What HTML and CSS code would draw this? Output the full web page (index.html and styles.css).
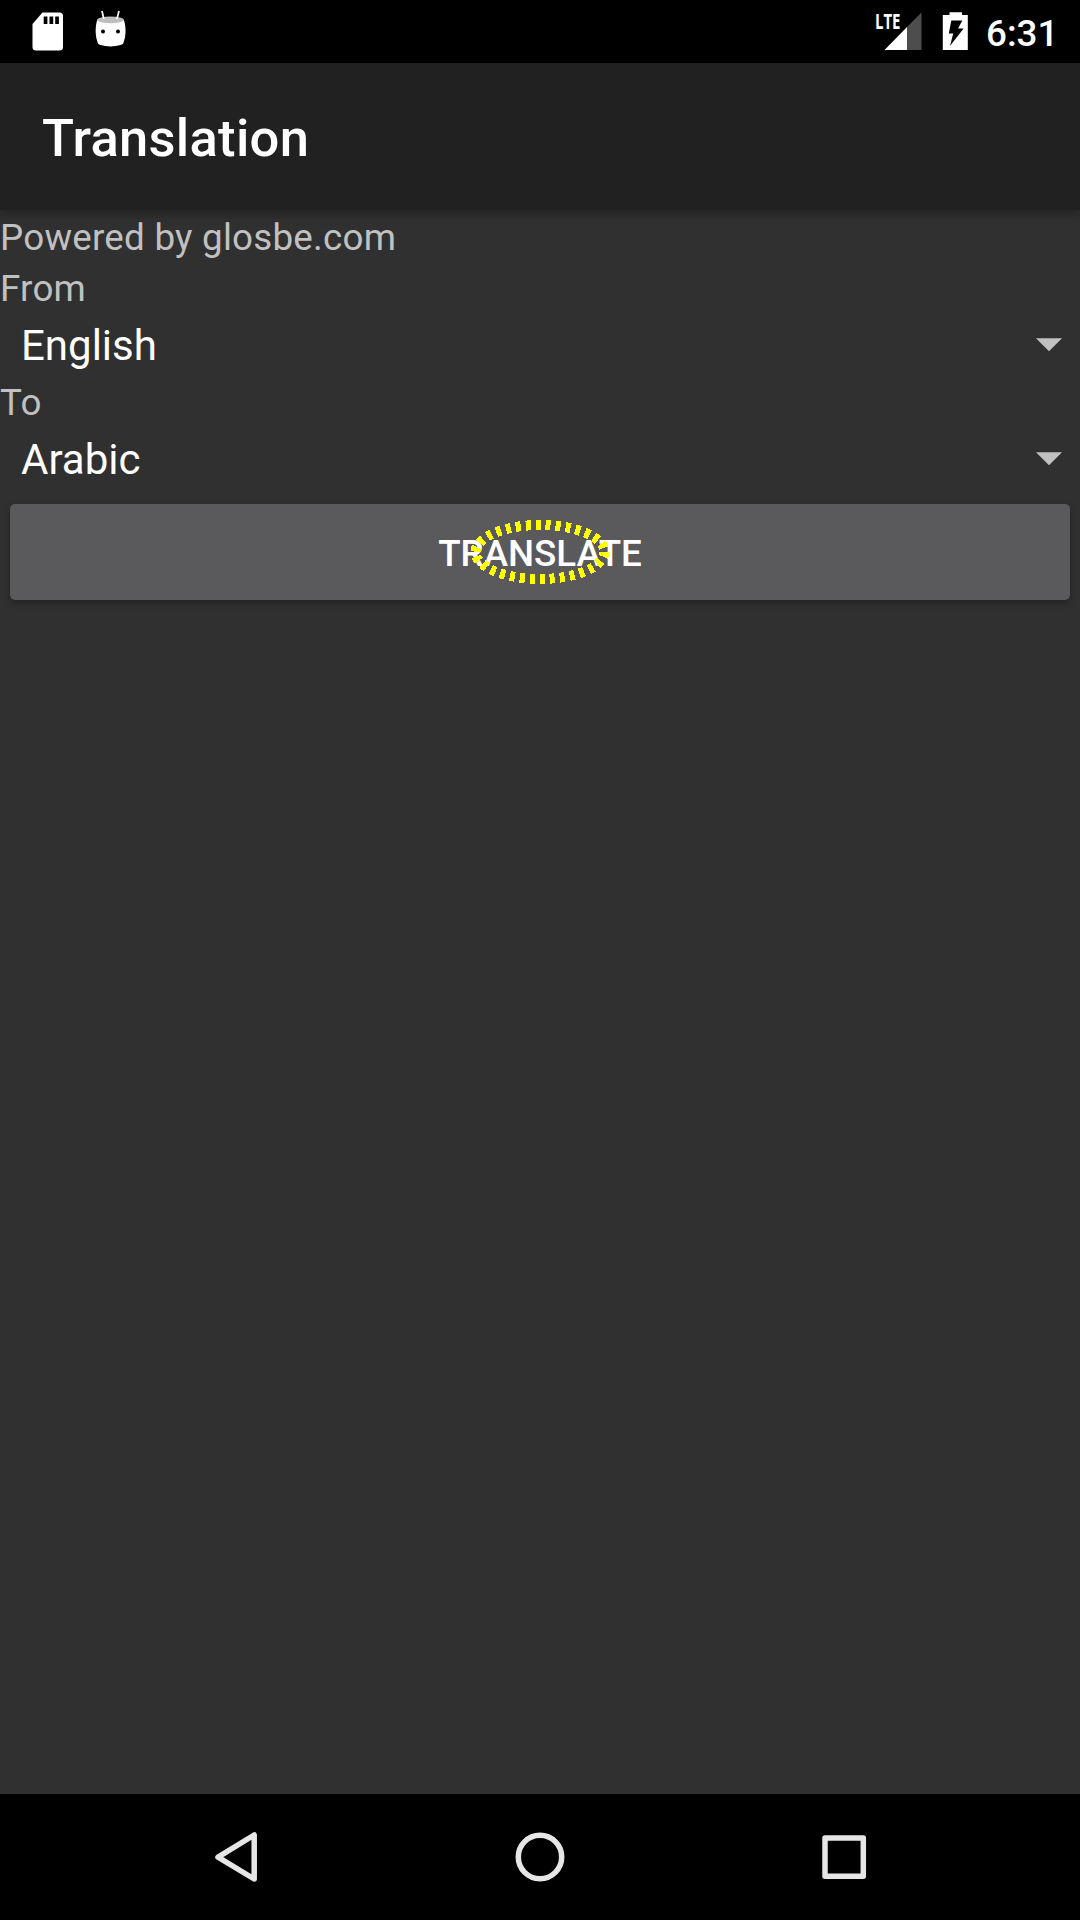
FILE: index.html
```html
<!DOCTYPE html>
<html lang="en">
<head>
<meta charset="utf-8">
<title>Translation</title>
<link rel="stylesheet" href="styles.css">
</head>
<body>
<div class="screen">
  <header class="status-bar">
    <svg class="icon-notifications" width="180" height="63" viewBox="0 0 180 63">
      <path fill="#fff" d="M42.500 12.500H59.500Q63 12.500 63 16V47Q63 50.500 59.500 50.500H36Q32.500 50.500 32.500 47V24Z"/>
      <path d="M43.700 16.500h3.700v7.500h-3.700zM49.500 16.500h3.700v7.500h-3.700zM55.200 16.500h3.700v7.500h-3.700z"/>
      <path stroke="#fff" stroke-width="1.700" d="M102 11l2 9M119 11l-2.300 9"/>
      <path fill="#fff" d="M97.300 19.500C95 27 95 36 98 43.500Q99 45.500 110.500 46.500Q122 45.500 123.200 43.500C126.200 36 126.200 27 123.800 19.500Z"/>
      <ellipse cx="110.500" cy="19.800" rx="13.200" ry="3.400" fill="#bdbdbd"/>
      <path stroke="#fff" stroke-width="1.700" d="M103.300 17l.7 2M117.400 17l-.6 2"/>
      <circle cx="103" cy="31.500" r="2"/>
      <circle cx="118" cy="31.500" r="2"/>
    </svg>
    <div class="status-right">
      <svg width="100" height="63" viewBox="870 0 100 63">
        <path fill="#4d4d4d" d="M921.500 12.500V50H907V27Z"/>
        <path fill="#fff" d="M884.500 50L907 27V50Z"/>
        <text class="network" x="875" y="29" textLength="25.500" lengthAdjust="spacingAndGlyphs">LTE</text>
        <path fill="#fff" d="M949.500 12.300h12.500v2.700h5.800v35h-25v-35h6.700z"/>
        <path d="M951.300 20.500h11l-4.200 8h5.500L950 46l3.200-12.500h-4.400z"/>
      </svg>
      <span class="clock">6:31</span>
    </div>
  </header>
  <div class="app-bar"><h1 class="title">Translation</h1></div>
  <main class="content">
    <p class="label">Powered by glosbe.com</p>
    <p class="label">From</p>
    <div class="spinner"><span>English</span>
      <svg width="26" height="14" viewBox="0 0 26 14"><path fill="#c1c1c1" d="M0 .3h26l-13 13z"/></svg>
    </div>
    <p class="label">To</p>
    <div class="spinner"><span>Arabic</span>
      <svg width="26" height="14" viewBox="0 0 26 14"><path fill="#c1c1c1" d="M0 .3h26l-13 13z"/></svg>
    </div>
    <button class="translate" type="button">Translate
      <svg class="highlight" width="144" height="68" viewBox="468 518 144 68">
        <ellipse cx="540" cy="552" rx="64.500" ry="27" fill="none" stroke="#ff0" stroke-width="10" stroke-dasharray="5 5" shape-rendering="crispEdges"/>
      </svg>
    </button>
  </main>
  <nav class="nav-bar">
    <svg width="1080" height="126" viewBox="0 1794 1080 126" fill="none" stroke="#e6e6e6" stroke-width="5.500" stroke-linejoin="round">
      <path d="M254.200 1835V1879L218 1857.200Z"/>
      <circle cx="540" cy="1857" r="21.700"/>
      <rect x="825" y="1838" width="38.300" height="38.300"/>
    </svg>
  </nav>
</div>
</body>
</html>
```

FILE: styles.css
```css
* { box-sizing: border-box; }
body { margin: 0; background: #303030; }
.screen {
  width: 1080px;
  height: 1920px;
  display: flex;
  flex-direction: column;
  overflow: hidden;
  background: #303030;
  font-family: Roboto, sans-serif;
  color: #fff;
}
svg { display: block; flex: none; }
.status-bar {
  height: 63px;
  flex: none;
  display: flex;
  justify-content: space-between;
  background: #000;
}
.status-right { display: flex; width: 210px; }
.network { font: 700 22px "Open Sans", sans-serif; fill: #fff; }
.clock {
  margin-left: 16px;
  padding-top: 2px;
  font-size: 36.750px;
  font-weight: 500;
  line-height: 63px;
}
.app-bar {
  height: 147px;
  flex: none;
  display: flex;
  align-items: center;
  padding: 2px 42px 0;
  background: #212121;
  box-shadow: 0 4px 10px rgba(0, 0, 0, .28);
}
.title {
  margin: 0;
  font-size: 52.500px;
  font-weight: 500;
  line-height: 62px;
  letter-spacing: .3px;
}
.content { flex: 1; display: flex; flex-direction: column; }
.label {
  margin: 0;
  height: 51px;
  padding-top: 2px;
  font-size: 36.750px;
  line-height: 51px;
  letter-spacing: .24px;
  color: #c1c1c1;
}
.spinner {
  height: 63px;
  display: flex;
  align-items: center;
  justify-content: space-between;
  padding: 0 18.500px 0 21px;
  font-size: 42px;
}
.spinner span { padding-top: 4px; line-height: 59px; }
.spinner svg { margin-top: 2px; }
.translate {
  position: relative;
  height: 96px;
  margin: 15px 10px 0;
  padding: 3px 0 0;
  border: 0;
  border-radius: 5px;
  background: #5a5a5c;
  box-shadow: 0 3px 6px rgba(0, 0, 0, .3);
  color: #fff;
  font: 500 36.750px Roboto, sans-serif;
  text-transform: uppercase;
}
.highlight { position: absolute; left: 458px; top: 14px; }
.nav-bar { height: 126px; flex: none; background: #000; }
```
